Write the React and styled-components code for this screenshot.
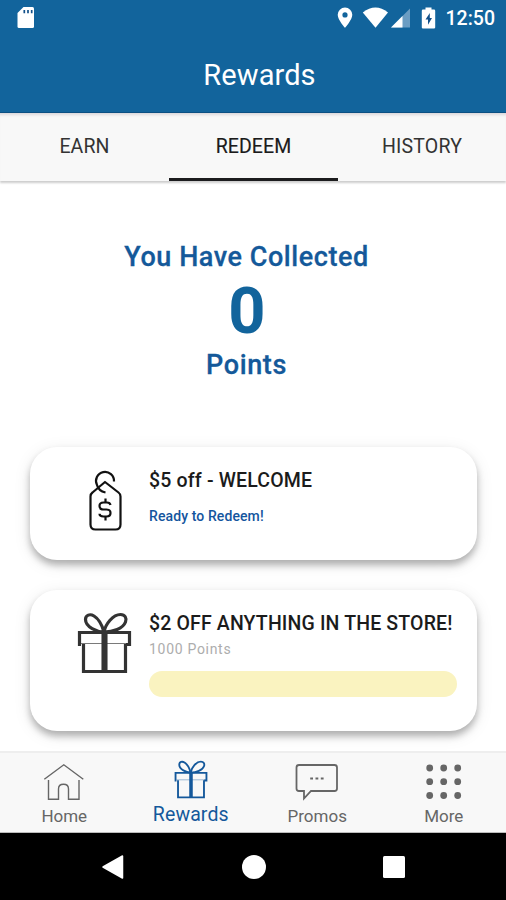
import React from 'react'
import styled, { createGlobalStyle } from 'styled-components'

const GlobalStyle = createGlobalStyle`
* { box-sizing: border-box; }
body {
  margin: 0;
  font-family: Roboto, "Liberation Sans", sans-serif;
  background: #fff;
}
`
const Screen = styled.div`
  width: 506px;
  height: 900px;
  display: flex;
  flex-direction: column;
  overflow: hidden;
`
const Header = styled.header`
  height: 113px;
  flex: none;
  background: #12649c;
  border-bottom: 1px solid #0c5083;
  color: #fff;
`
const StatusBar = styled.div`
  height: 36px;
  padding: 0 11px 0 17px;
  display: flex;
  justify-content: space-between;
  align-items: center;
`
const StatusIcons = styled.div`
  display: flex;
  align-items: center;
`
const Time = styled.span`
  margin-left: 9px;
  padding-top: 1px;
  font-size: 19.5px;
  line-height: 36px;
  font-weight: 500;
`
const Title = styled.h1`
  margin: 0;
  padding: 19px 0 0 13px;
  text-align: center;
  font-size: 29px;
  line-height: 40px;
  font-weight: 400;
  letter-spacing: 0.1px;
`
const Tabs = styled.nav`
  height: 68px;
  flex: none;
  display: grid;
  grid-template-columns: 169px 169px 168px;
  background: #f8f8f8;
  box-shadow: inset 0 4px 3px -2px #dcd8dc, 0 2px 2px rgba(0, 0, 0, 0.2);
`
const Tab = styled.button`
  border: 0;
  border-bottom: 3px solid ${({ $active }) => ($active ? '#1c1c1e' : 'transparent')};
  background: none;
  padding: 2px 0 0;
  font-family: inherit;
  font-size: 19.5px;
  line-height: 24px;
  letter-spacing: ${({ $spacing }) => $spacing || 0}px;
  color: ${({ $active }) => ($active ? '#1b1b1b' : '#333')};
  -webkit-text-stroke: ${({ $active }) => ($active ? 0.15 : 0)}px #1b1b1b;
`
const Content = styled.main`
  flex: 1;
  min-height: 0;
  overflow: hidden;
  padding: 59px 29px 0 30px;
`
const Balance = styled.section`
  height: 207px;
  padding-right: 14px;
  text-align: center;
  color: #14599a;
`
const BalanceLabel = styled.p`
  margin: 0;
  font-size: 27px;
  line-height: 34px;
  font-weight: 500;
  letter-spacing: ${({ $spacing }) => $spacing}px;
  -webkit-text-stroke: 0.3px #14599a;
`
const BalanceValue = styled.p`
  margin: 0;
  padding-left: 1px;
  font-size: 65px;
  line-height: 74px;
  font-weight: 700;
  color: #12649c;
`
const Card = styled.article`
  height: ${({ $height }) => $height}px;
  margin-bottom: 30px;
  padding-right: 20px;
  display: grid;
  grid-template-columns: 119px 1fr;
  border-radius: 27px;
  background: #fff;
  box-shadow: 0 5px 7px rgba(0, 0, 0, 0.27), 0 4px 18px rgba(0, 0, 0, 0.09);
`
const CardIcon = styled.div`
  padding: 22px 0 0 47px;
  color: ${({ $color }) => $color};
`
const CardBody = styled.div`
  padding-top: 21px;
`
const CardTitle = styled.h2`
  margin: 0;
  font-size: 19.5px;
  line-height: 25px;
  font-weight: 500;
  letter-spacing: ${({ $spacing }) => $spacing}px;
  color: #1b1b1b;
  white-space: nowrap;
`
const Ready = styled.p`
  margin: 13px 0 0;
  font-size: 14px;
  line-height: 20px;
  font-weight: 500;
  letter-spacing: 0.1px;
  color: #14559e;
`
const Cost = styled.p`
  margin: 4px 0 0;
  font-size: 14px;
  line-height: 18px;
  letter-spacing: 0.7px;
  color: #adadad;
`
const Progress = styled.div`
  height: 26px;
  margin-top: 13px;
  border-radius: 13px;
  background: #faf3c0;
`
const BottomNav = styled.nav`
  height: 82px;
  flex: none;
  padding-left: 1px;
  display: grid;
  grid-template-columns: repeat(4, 126.5px);
  border-top: 2px solid #eee;
  border-bottom: 1px solid #bbb;
  background: #f8f8f8;
`
const NavItem = styled.a`
  display: flex;
  flex-direction: column;
  align-items: center;
  color: ${({ $active }) => ($active ? '#14589b' : '#666')};
  svg { margin-top: ${({ $active }) => ($active ? 7 : 10)}px; }
`
const NavLabel = styled.span`
  margin-top: ${({ $active }) => ($active ? 5 : 4)}px;
  font-size: ${({ $active }) => ($active ? 19.5 : 17)}px;
  line-height: 22px;
  letter-spacing: ${({ $active }) => ($active ? 0.1 : 0)}px;
`
const SystemBar = styled.footer`
  height: 67px;
  flex: none;
  display: flex;
  align-items: center;
  background: #000;
  padding: 0 100px 0 101px;
  justify-content: space-between;
`

const SdIcon = () => (
  <svg width="18" height="22" viewBox="0 0 18 22">
    <path d="M6.5 0H15.5Q17 0 17 1.5V19.5Q17 21 15.5 21H2Q.5 21 .5 19.5V6Z" fill="#fff" />
    <path d="M7.3 3V6.2M11 3V6.2M14.7 3V6.2" stroke="#12508a" strokeWidth="1.7" />
  </svg>
)

const StatusGlyphs = () => (
  <svg width="100" height="22" viewBox="337 6.5 100 22">
    <path d="M345 7a7.3 7.3 0 0 0-7.3 7.3c0 5 7.3 13 7.3 13s7.3-8 7.3-13A7.3 7.3 0 0 0 345 7Zm0 10a2.6 2.6 0 1 1 0-5.2 2.6 2.6 0 0 1 0 5.2Z" fill="#fff" />
    <path d="M362.8 12Q375.5 2 388 12L375.5 27.3Z" fill="#fff" />
    <path d="M410 8V27H391Z" fill="#6b9dc3" />
    <path d="M402.5 15.5V27H391Z" fill="#fff" />
    <path d="M425.5 7H431.5V9H434Q435.2 9 435.2 10.2V27Q435.2 28 434 28H423Q421.8 28 421.8 27V10.2Q421.8 9 423 9H425.5Z" fill="#fff" />
    <path d="M429.8 12.5L425.5 19H428V24.3L432 17.4H429.8Z" fill="#12508a" />
  </svg>
)

const TagIcon = () => (
  <svg width="56" height="64" viewBox="77 469 56 64" fill="none" stroke="currentColor" strokeWidth="2.2">
    <path d="M114 481.5A9 9 0 1 0 97 485Q98.5 491 105.5 492.5" />
    <path d="M105 482L118.500 492.500Q120.500 494 120.500 496.500V524.500Q120.500 529.500 115.500 529.500H95.500Q90.500 529.500 90.500 524.500V496.500Q90.500 494 92.500 492.500Z" strokeLinejoin="round" />
    <path d="M110.500 505Q110 502.500 107 502.500H103.500Q99.500 502.500 99.500 506Q99.500 509.500 103.500 509.500H106.500Q110.500 509.500 110.500 513Q110.500 516.500 106.500 516.500H103.500Q99.500 516.500 99.500 513.800M105.500 498.500V502.500M105.500 516.500V520.500" />
  </svg>
)

const GiftIcon = ({ width = 55, height = 62, weight = 3.2 }) => (
  <svg width={width} height={height} viewBox="77 612 55 62" preserveAspectRatio="none" fill="none" stroke="currentColor" strokeWidth={weight}>
    <path d="M104 632C97 632 85.500 627 85.500 619.500C85.500 615 90 613.500 94 616C99 619 102 625 104 632Z" />
    <path d="M104 632C105.500 624 113 614.500 120.500 614.500C125 614.500 127 618 125.500 622C123 628.500 113 632 104 632Z" />
    <path d="M81 644.500H79.500V632.500H129.500V644.500H126M83.500 644V671.500H125.500V644" />
    <path d="M81 643.500H128" strokeWidth="1" opacity=".65" />
    <path d="M104.500 632V672" strokeWidth={weight * 1.9} />
  </svg>
)

const HomeIcon = () => (
  <svg width="42" height="38" viewBox="43 763 42 38" fill="none" stroke="currentColor" strokeWidth="1.4">
    <path d="M44.3 779.3L63.8 764.8L83.3 779.3" />
    <path d="M48.5 780V799.3H58.5V789Q58.5 784.3 63.500 784.3Q68.5 784.3 68.5 789V799.3H79V780" />
  </svg>
)

const PromosIcon = () => (
  <svg width="44" height="38" viewBox="295 763 44 38" fill="none" stroke="currentColor" strokeWidth="1.8">
    <path d="M299 765H334.5Q337 765 337 767.5V788.5Q337 791 334.5 791H311L304 798.5V791H299Q296.5 791 296.5 788.5V767.5Q296.5 765 299 765Z" />
    <path d="M310.2 778.5H313M315.5 778.5H318.3M320.8 778.5H323.6" strokeWidth="2.2" />
  </svg>
)

const MoreIcon = () => (
  <svg width="38" height="38" viewBox="425 763 38 38" fill="currentColor">
    {[768, 781.7, 795.5].map((y) =>
      [429.7, 443.7, 457.7].map((x) => <circle key={`${x}-${y}`} cx={x} cy={y} r="3.4" />)
    )}
  </svg>
)

const navItems = [
  { label: 'Home', icon: <HomeIcon /> },
  { label: 'Rewards', icon: <GiftIcon width={34} height={39} weight={3} />, active: true },
  { label: 'Promos', icon: <PromosIcon /> },
  { label: 'More', icon: <MoreIcon /> },
]

const App = () => {
  return (
    <>
      <GlobalStyle />
      <Screen>
        <Header>
          <StatusBar>
            <SdIcon />
            <StatusIcons>
              <StatusGlyphs />
              <Time>12:50</Time>
            </StatusIcons>
          </StatusBar>
          <Title>Rewards</Title>
        </Header>
        <Tabs>
          <Tab $spacing={0.1}>EARN</Tab>
          <Tab $active $spacing={0.1}>REDEEM</Tab>
          <Tab $spacing={0.2}>HISTORY</Tab>
        </Tabs>
        <Content>
          <Balance>
            <BalanceLabel $spacing={0.55}>You Have Collected</BalanceLabel>
            <BalanceValue>0</BalanceValue>
            <BalanceLabel $spacing={0.65}>Points</BalanceLabel>
          </Balance>
          <Card $height={113}>
            <CardIcon $color="#111"><TagIcon /></CardIcon>
            <CardBody>
              <CardTitle $spacing={0.17}>$5 off - WELCOME</CardTitle>
              <Ready>Ready to Redeem!</Ready>
            </CardBody>
          </Card>
          <Card $height={141}>
            <CardIcon $color="#333"><GiftIcon /></CardIcon>
            <CardBody>
              <CardTitle $spacing={0.15}>$2 OFF ANYTHING IN THE STORE!</CardTitle>
              <Cost>1000 Points</Cost>
              <Progress />
            </CardBody>
          </Card>
        </Content>
        <BottomNav>
          {navItems.map(({ label, icon, active }) => (
            <NavItem key={label} $active={active}>
              {icon}
              <NavLabel $active={active}>{label}</NavLabel>
            </NavItem>
          ))}
        </BottomNav>
        <SystemBar>
          <svg width="24" height="26" viewBox="0 0 24 26">
            <path d="M2 13L21.5 2V24Z" fill="#fff" stroke="#fff" strokeWidth="1.5" strokeLinejoin="round" />
          </svg>
          <svg width="26" height="26" viewBox="0 0 26 26"><circle cx="13" cy="13" r="12" fill="#fff" /></svg>
          <svg width="24" height="24" viewBox="0 0 24 24"><rect x="1" y="1" width="22" height="22" rx="1.5" fill="#fff" /></svg>
        </SystemBar>
      </Screen>
    </>
  )
}

export default App
